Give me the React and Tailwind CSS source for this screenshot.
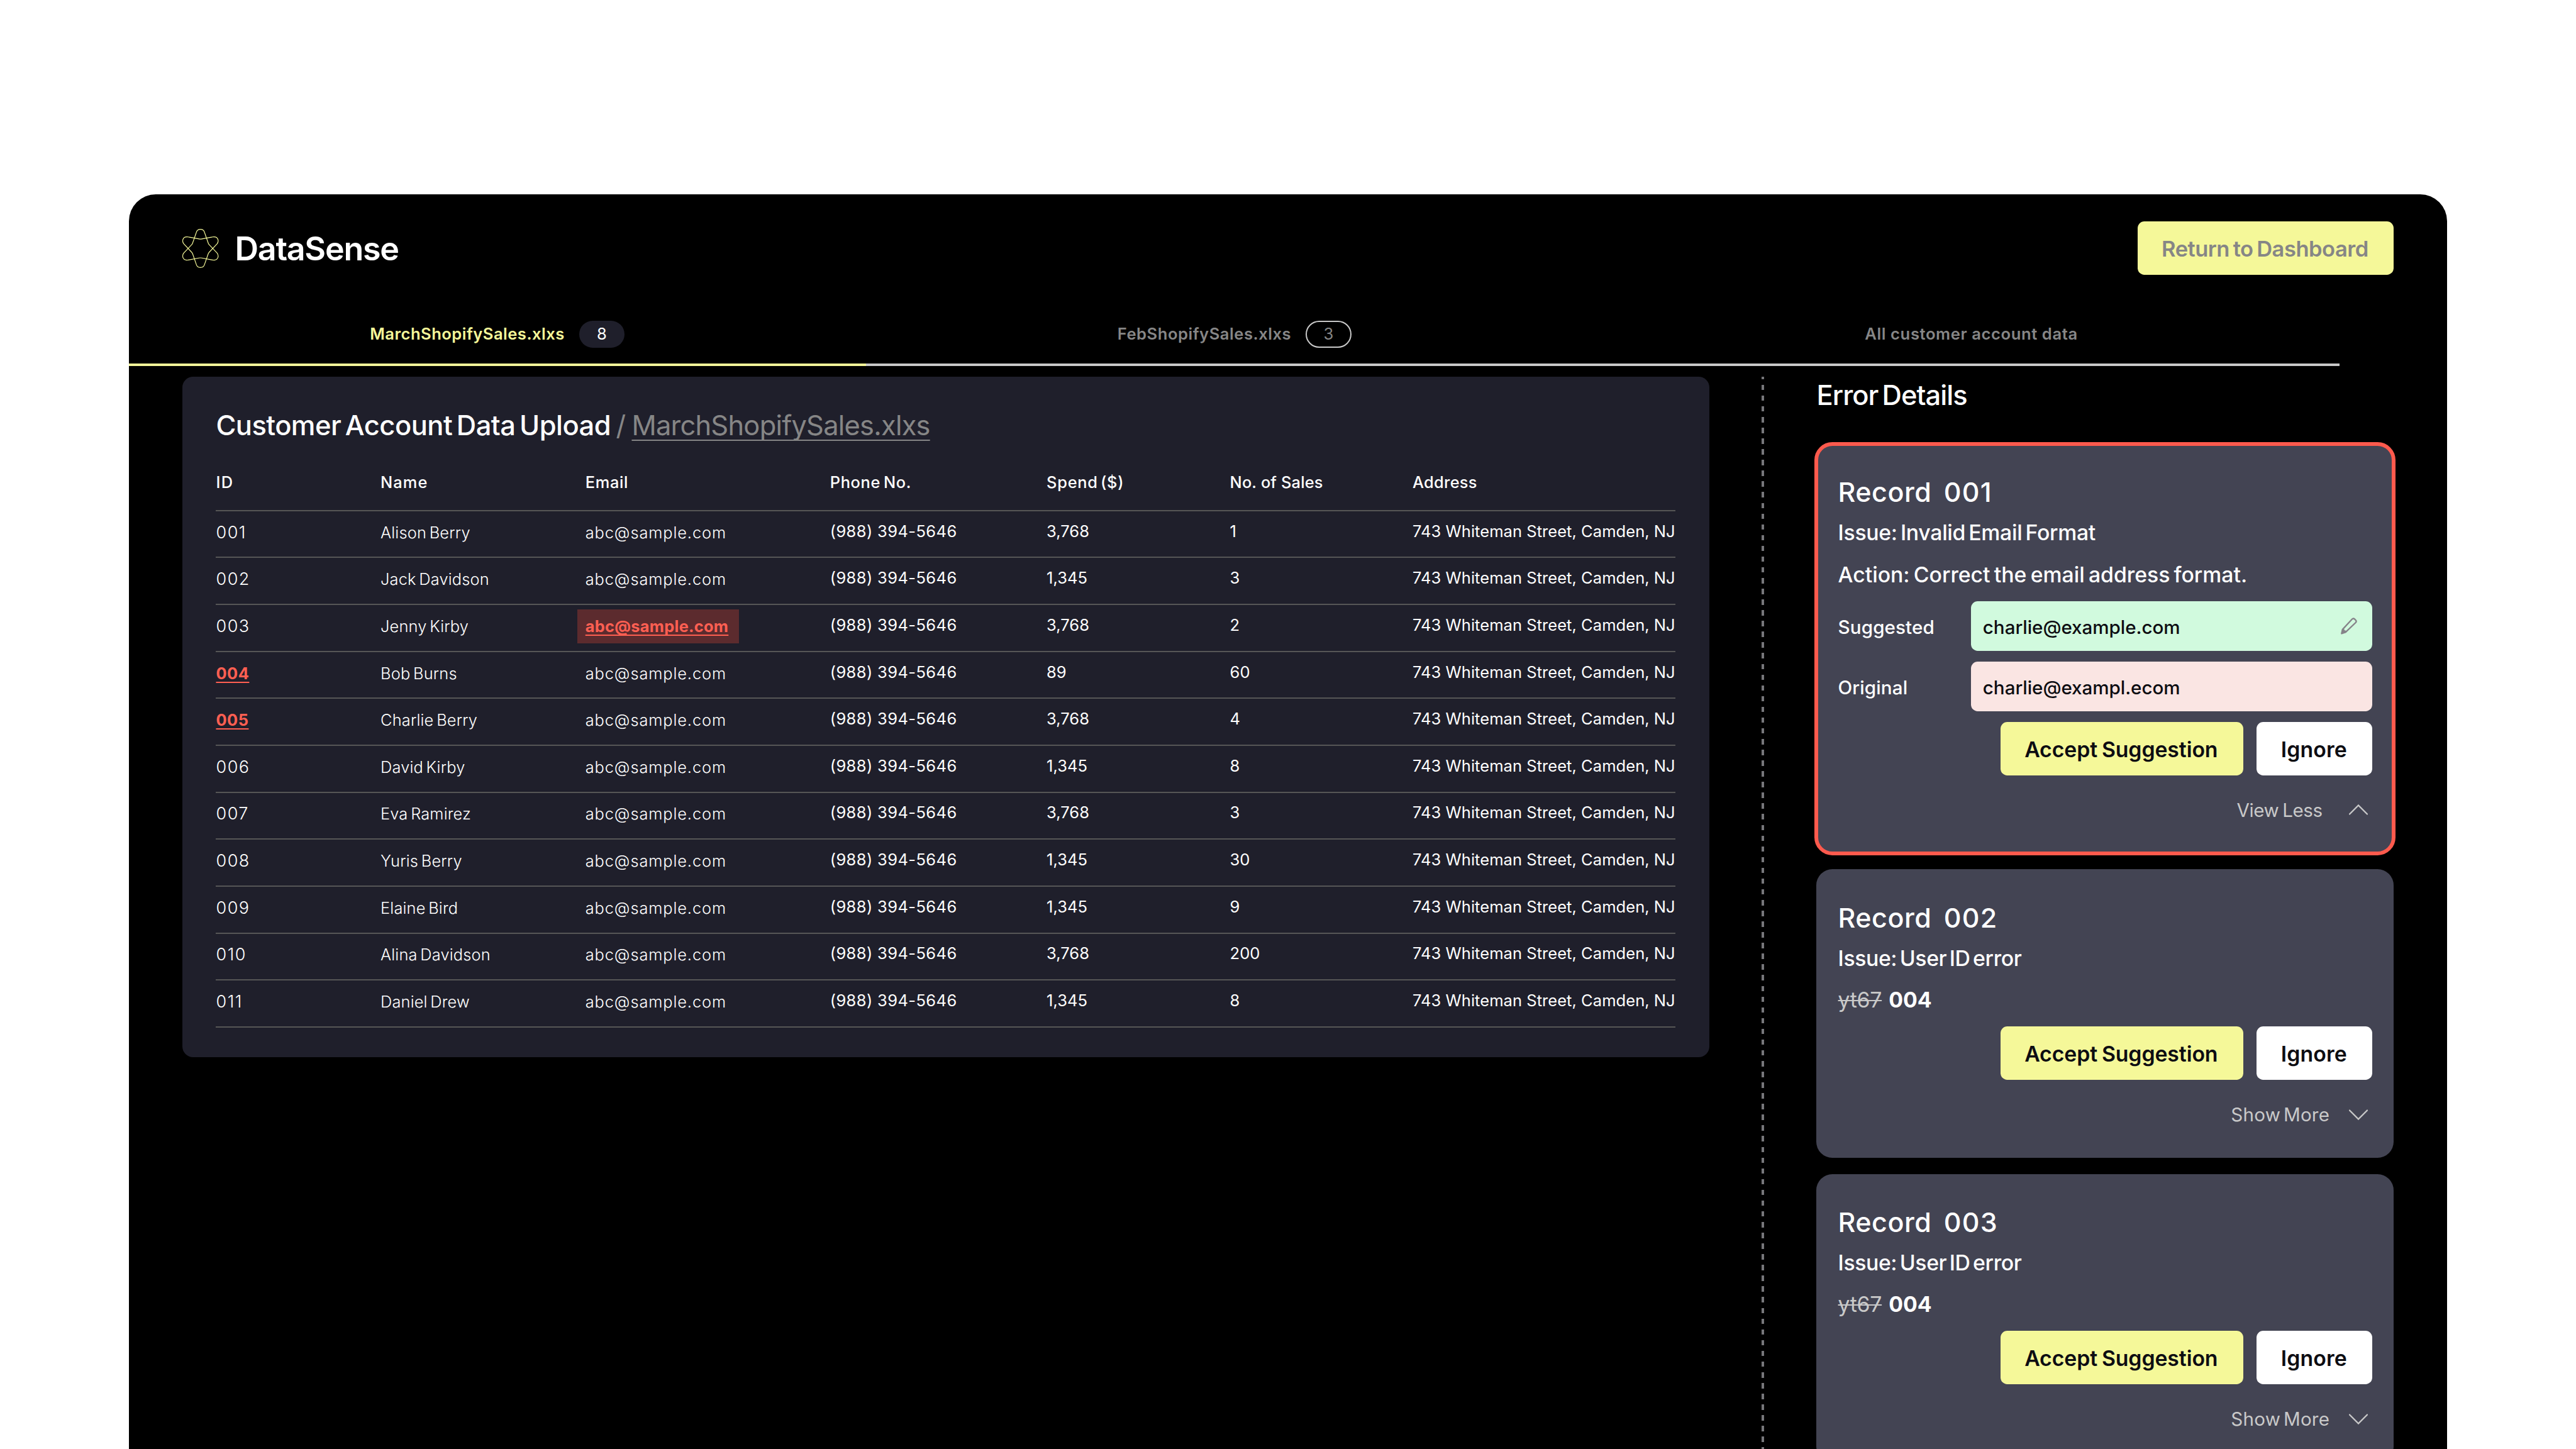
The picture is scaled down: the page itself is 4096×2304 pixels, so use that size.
import React from "react";

const customers = [
  { id: "001", name: "Alison Berry", spend: "3,768", sales: "1" },
  { id: "002", name: "Jack Davidson", spend: "1,345", sales: "3" },
  { id: "003", name: "Jenny Kirby", spend: "3,768", sales: "2", badEmail: true },
  { id: "004", name: "Bob Burns", spend: "89", sales: "60", badId: true },
  { id: "005", name: "Charlie Berry", spend: "3,768", sales: "4", badId: true },
  { id: "006", name: "David Kirby", spend: "1,345", sales: "8" },
  { id: "007", name: "Eva Ramirez", spend: "3,768", sales: "3" },
  { id: "008", name: "Yuris Berry", spend: "1,345", sales: "30" },
  { id: "009", name: "Elaine Bird", spend: "1,345", sales: "9" },
  { id: "010", name: "Alina Davidson", spend: "3,768", sales: "200" },
  { id: "011", name: "Daniel Drew", spend: "1,345", sales: "8" },
];

const columns = "grid grid-cols-[261.6px_325.7px_389px_344.3px_291.5px_290.5px_1fr] items-center";

const lobe =
  "M160 37C147 37 137 43 133 56L108 128Q106 135 101 140L48 196C34 215 42 243 68 243C72 243 76 243 80 242L150 229Q160 227 170 229L240 242C244 243 248 243 252 243C278 243 286 215 272 196L219 140Q214 135 212 128L187 56C183 43 173 37 160 37Z";

function Logo() {
  return (
    <svg viewBox="39 34 242 262" className="h-[62.1px] w-[57.4px]" fill="none" stroke="#f5f899" strokeWidth="5">
      <path d={lobe} />
      <path d={lobe} transform="translate(0 330) scale(1 -1)" />
    </svg>
  );
}

function Pencil() {
  return (
    <svg viewBox="70 88 120 120" className="h-[28.4px] w-[28.4px]">
      <path
        d="M86 172L149 104Q158 94 167 102L174 109Q182 117 174 126L107 190L80 199Z"
        fill="none"
        stroke="#868389"
        strokeWidth="10"
        strokeLinejoin="round"
      />
      <path d="M77 202L84 169L96 168L100 178L109 180L110 193Z" fill="#868389" />
    </svg>
  );
}

function Chevron({ up }) {
  return (
    <svg viewBox="0 0 30 17" className="h-[17px] w-[30px]" fill="none" stroke="#c9c9c9" strokeWidth="2.3" strokeLinecap="round">
      <path d={up ? "M1 15.5L15 1.5L29 15.5" : "M1 1.5L15 15.5L29 1.5"} />
    </svg>
  );
}

function Header() {
  return (
    <header className="flex items-center justify-between px-[85.33px] pt-[42.67px]">
      <div className="flex items-center gap-[26px]">
        <Logo />
        <h1 className="pt-[3px] text-[52px] leading-[64px] font-semibold tracking-[-1.26px] text-white">DataSense</h1>
      </div>
      <button className="flex h-[85.33px] w-[407px] items-center justify-center rounded-[10.67px] bg-[#f5f899] pt-[2px] pr-[2px] text-[34.5px] font-semibold tracking-[-0.5px] [word-spacing:-2.5px] text-[#868686]">
        Return to Dashboard
      </button>
    </header>
  );
}

function Tabs() {
  const base = "flex h-[98.13px] w-[1171.9px] items-center justify-center gap-[23px] border-b-4 text-[25.6px] font-semibold";
  const badge = "flex h-[42.67px] w-[72.5px] items-center justify-center rounded-full font-normal tracking-normal";
  return (
    <nav className="mt-[46.93px] flex">
      <div className={`${base} border-[#f5f899] tracking-[0.46px] text-[#f5f899]`}>
        MarchShopifySales.xlxs
        <span className={`${badge} bg-[#1f1f2b] text-white`}>8</span>
      </div>
      <div className={`${base} border-[#c9c9c9] tracking-[0.51px] text-[#868686]`}>
        FebShopifySales.xlxs
        <span className={`${badge} border-2 border-[#c9c9c9]`}>3</span>
      </div>
      <div className={`${base} border-[#c9c9c9] tracking-[0.59px] text-[#868686]`}>All customer account data</div>
    </nav>
  );
}

function CustomerRow({ row }) {
  const alert =
    "font-bold text-[#ff5f52] underline decoration-[1.5px] underline-offset-[4px] [text-decoration-skip-ink:none]";
  return (
    <div className={`${columns} h-[74.67px] border-b-2 border-[#565656] pb-[5px] text-[25.4px] leading-[40px] font-light text-white`}>
      <span>
        {row.badId ? (
          <span className={`${alert} tracking-[0.5px]`}>{row.id}</span>
        ) : (
          <span className="text-[27px] tracking-[1.5px]">{row.id}</span>
        )}
      </span>
      <span className="tracking-[0.15px] [word-spacing:-2.6px]">{row.name}</span>
      {row.badEmail ? (
        <span className="-ml-[12.3px] flex h-[53.5px] w-[256.5px] items-center bg-[#5c2b2e] pl-[12.3px]">
          <span className={`${alert} tracking-[0.27px]`}>abc@sample.com</span>
        </span>
      ) : (
        <span className="tracking-[0.89px]">abc@sample.com</span>
      )}
      <span className="pb-[4px] text-[25.6px] font-normal tracking-[0.33px]">(988) 394-5646</span>
      <span className="pb-[4px] text-[25.6px] font-normal">{row.spend}</span>
      <span className="pb-[4px] text-[25.6px] font-normal">{row.sales}</span>
      <span className="pb-[4px] text-[25.6px] font-normal">743 Whiteman Street, Camden, NJ</span>
    </div>
  );
}

function CustomerTable() {
  return (
    <section className="h-[1081.6px] w-[2427.7px] shrink-0 rounded-[17.07px] bg-[#1f1f2b] px-[53.33px] pt-[46.1px] whitespace-nowrap">
      <div className="flex text-[43.5px] leading-[60px] text-[#868686]">
        <h2 className="w-[627px] font-medium tracking-[-0.55px] [word-spacing:-4.4px] text-white">
          Customer Account Data Upload
        </h2>
        <span className="w-[34px] text-center">/</span>
        <span className="tracking-[-0.81px] underline decoration-2 underline-offset-[7px] [text-decoration-skip-ink:none]">
          MarchShopifySales.xlxs
        </span>
      </div>
      <div className={`${columns} h-[107.2px] border-b-2 border-[#565656] pt-[17.6px] text-[25.4px] font-medium text-white`}>
        <span className="tracking-[1.4px]">ID</span>
        <span className="tracking-[1.06px]">Name</span>
        <span className="tracking-[0.65px]">Email</span>
        <span className="tracking-[0.65px] [word-spacing:-2.6px]">Phone No.</span>
        <span className="tracking-[0.75px] [word-spacing:-3.4px]">Spend ($)</span>
        <span className="tracking-[0.15px]">No. of Sales</span>
        <span className="tracking-[0.27px]">Address</span>
      </div>
      {customers.map((row) => (
        <CustomerRow key={row.id} row={row} />
      ))}
    </section>
  );
}

function CardTitle({ id }) {
  return (
    <h3 className="flex text-[43px] leading-[48px] font-medium text-white">
      <span className="tracking-[0.5px]">Record</span>
      <span className="ml-[19.5px] tracking-[1.2px]">{id}</span>
    </h3>
  );
}

function Actions() {
  const button = "flex h-[85.33px] items-center justify-center rounded-[10.67px] pt-[4px] text-[33.8px] font-semibold text-[#0d0d12]";
  return (
    <div className="flex justify-end gap-[21.33px]">
      <button className={`${button} w-[386.1px] bg-[#f5f899] pr-[2px] tracking-[-0.1px] [word-spacing:-1.5px]`}>
        Accept Suggestion
      </button>
      <button className={`${button} w-[183.5px] bg-white pr-[1px] tracking-[0.12px]`}>Ignore</button>
    </div>
  );
}

function ErrorField({ label, value, tone, editable }) {
  return (
    <div className="flex h-[78.93px] items-center justify-between text-[29.6px] leading-[40px] font-medium">
      <span className="pt-[3px] tracking-[0.1px] text-white">{label}</span>
      <div className={`flex h-full w-[638px] items-center justify-between rounded-[10.67px] pr-[21.8px] pl-[19.2px] ${tone}`}>
        <span className="pt-[3px] tracking-[-0.05px] text-[#0d0d12]">{value}</span>
        {editable && <Pencil />}
      </div>
    </div>
  );
}

function ActiveCard() {
  return (
    <article className="-m-[3px] h-[656.67px] rounded-[28.6px] border-[6px] border-[#ff5a4d] bg-[#434453] px-[31.13px] pt-[48.9px]">
      <CardTitle id="001" />
      <p className="mt-[21.4px] text-[33.8px] leading-[40px] font-medium tracking-[-0.3px] [word-spacing:-3.6px] text-white">
        Issue: Invalid Email Format
      </p>
      <p className="mt-[26.6px] text-[33.8px] leading-[40px] font-medium tracking-[-0.04px] [word-spacing:-2.67px] text-white">
        Action: Correct the email address format.
      </p>
      <div className="mt-[21.7px] mb-[17.07px] flex flex-col gap-[17.07px]">
        <ErrorField label="Suggested" value="charlie@example.com" tone="bg-[#d1fade]" editable />
        <ErrorField label="Original" value="charlie@exampl.ecom" tone="bg-[#fae5e3]" />
      </div>
      <Actions />
      <div className="mt-[34.8px] flex items-center justify-end gap-[42.6px] pr-[6.5px] text-[29.6px] leading-[40px] tracking-[-0.46px] [word-spacing:-1.95px] text-[#c9c9c9]">
        View Less
        <Chevron up />
      </div>
    </article>
  );
}

function RecordCard({ id }) {
  return (
    <article className="h-[458.67px] shrink-0 rounded-[25.6px] bg-[#434453] px-[34.13px] pt-[52.4px]">
      <CardTitle id={id} />
      <p className="mt-[21.3px] text-[33.8px] leading-[40px] font-medium tracking-[-0.4px] [word-spacing:-4.1px] text-white">
        Issue: User ID error
      </p>
      <p className="mt-[26.1px] mb-[21.8px] flex gap-[11px] text-[33.8px] leading-[40px]">
        <span className="tracking-[-0.27px] text-[#c9c9c9] line-through decoration-2">yt67</span>
        <span className="font-bold text-white">004</span>
      </p>
      <Actions />
      <div className="mt-[34.8px] flex items-center justify-end gap-[31px] pr-[6.5px] text-[29.6px] leading-[40px] tracking-[0.2px] [word-spacing:-3.63px] text-[#c9c9c9]">
        Show More
        <Chevron />
      </div>
    </article>
  );
}

export default function App() {
  return (
    <div className="h-[2304px] w-[4096px] overflow-hidden bg-white px-[204.8px] pt-[309.33px] font-['Inter',sans-serif]">
      <div className="flex h-full flex-col overflow-hidden rounded-t-[42.67px] bg-black">
        <Header />
        <Tabs />
        <main className="mt-[17.07px] flex min-h-0 flex-1 gap-[83.2px] pl-[85.33px]">
          <CustomerTable />
          <div className="w-[4.27px] shrink-0 bg-[repeating-linear-gradient(to_bottom,#77777b_0px,#77777b_4.27px,transparent_4.27px,transparent_12.8px,#77777b_12.8px,#77777b_17.067px)]" />
          <aside className="w-[917.33px] shrink-0">
            <h2 className="mb-[47.87px] pt-px text-[43.5px] leading-[57.8px] font-medium tracking-[-0.95px] [word-spacing:-4.6px] text-white">
              Error Details
            </h2>
            <div className="flex flex-col gap-[25.6px]">
              <ActiveCard />
              <RecordCard id="002" />
              <RecordCard id="003" />
            </div>
          </aside>
        </main>
      </div>
    </div>
  );
}
